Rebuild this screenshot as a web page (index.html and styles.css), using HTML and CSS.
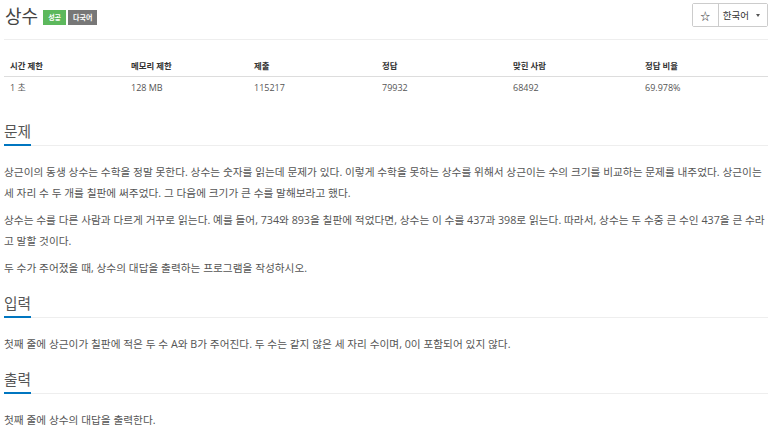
FILE: index.html
```html
<!DOCTYPE html>
<html lang="ko">
<head>
<meta charset="utf-8">
<title>상수</title>
<link rel="stylesheet" href="styles.css">
</head>
<body>
<div class="page">
  <div class="header">
    <div class="title-wrap">
      <h1 class="title">상수</h1>
      <span class="badge badge-success">성공</span>
      <span class="badge badge-default">다국어</span>
    </div>
    <div class="btn-group">
      <span class="btn btn-star">☆</span>
      <span class="btn btn-lang">한국어 <span class="caret"></span></span>
    </div>
  </div>

  <div class="info-table">
    <div class="th">시간 제한</div>
    <div class="th">메모리 제한</div>
    <div class="th">제출</div>
    <div class="th">정답</div>
    <div class="th">맞힌 사람</div>
    <div class="th">정답 비율</div>
    <div class="td">1 초</div>
    <div class="td">128 MB</div>
    <div class="td">115217</div>
    <div class="td">79932</div>
    <div class="td">68492</div>
    <div class="td">69.978%</div>
  </div>

  <section class="section">
    <h2 class="section-head"><span>문제</span></h2>
    <div class="section-body">
      <p>상근이의 동생 상수는 수학을 정말 못한다. 상수는 숫자를 읽는데 문제가 있다. 이렇게 수학을 못하는 상수를 위해서 상근이는 수의 크기를 비교하는 문제를 내주었다. 상근이는 세 자리 수 두 개를 칠판에 써주었다. 그 다음에 크기가 큰 수를 말해보라고 했다.</p>
      <p>상수는 수를 다른 사람과 다르게 거꾸로 읽는다. 예를 들어, 734와 893을 칠판에 적었다면, 상수는 이 수를 437과 398로 읽는다. 따라서, 상수는 두 수중 큰 수인 437을 큰 수라고 말할 것이다.</p>
      <p>두 수가 주어졌을 때, 상수의 대답을 출력하는 프로그램을 작성하시오.</p>
    </div>
  </section>

  <section class="section">
    <h2 class="section-head"><span>입력</span></h2>
    <div class="section-body">
      <p>첫째 줄에 상근이가 칠판에 적은 두 수 A와 B가 주어진다. 두 수는 같지 않은 세 자리 수이며, 0이 포함되어 있지 않다.</p>
    </div>
  </section>

  <section class="section">
    <h2 class="section-head"><span>출력</span></h2>
    <div class="section-body">
      <p>첫째 줄에 상수의 대답을 출력한다.</p>
    </div>
  </section>
</div>
</body>
</html>
```

FILE: styles.css
```css
html, body {
  margin: 0;
  padding: 0;
  background: #fff;
}
body {
  font-family: "Open Sans", "Noto Sans CJK KR", sans-serif;
  color: #555;
}
.page {
  padding: 0 5px 0 4px;
}
.header {
  display: flex;
  justify-content: space-between;
  align-items: flex-start;
  height: 40px;
  border-bottom: 1px solid #eee;
  box-sizing: border-box;
}
.title-wrap {
  display: flex;
  align-items: center;
  padding-top: 4px;
  padding-left: 1px;
}
.title {
  margin: 0;
  font-size: 18px;
  font-weight: 400;
  line-height: 24px;
  color: #444;
}
.badge {
  display: inline-block;
  height: 15px;
  line-height: 15px;
  padding: 0 5px;
  font-size: 7px;
  font-weight: 700;
  color: #fff;
  margin-top: 3px;
}
.badge-success {
  background: #5cb85c;
  margin-left: 5px;
}
.badge-default {
  background: #777;
  margin-left: 2px;
}
.btn-group {
  display: flex;
  margin-top: 3px;
  border: 1px solid #ccc;
  border-radius: 2px;
  height: 24px;
  box-sizing: border-box;
}
.btn {
  display: flex;
  align-items: center;
  font-size: 9.5px;
  color: #333;
  background: #fff;
}
.btn-star {
  width: 25px;
  justify-content: center;
  border-right: 1px solid #ccc;
  font-size: 10px;
}
.btn-lang {
  padding: 0 7px 0 4px;
  gap: 7px;
}
.caret {
  width: 0;
  height: 0;
  border-left: 2.5px solid transparent;
  border-right: 2.5px solid transparent;
  border-top: 3px solid #555;
}
.info-table {
  display: grid;
  grid-template-columns: 121px 123px 128px 131px 132px 1fr;
  margin-top: 15px;
}
.th {
  font-size: 8.4px;
  font-weight: 700;
  color: #333;
  height: 21px;
  line-height: 21px;
  padding: 0 6px;
  border-bottom: 1px solid #ddd;
}
.td {
  font-size: 9px;
  color: #555;
  height: 22px;
  line-height: 22px;
  padding: 0 6px;
}
.section {
  margin-top: 12px;
}
.info-table + .section {
  margin-top: 20px;
}
.section-head {
  margin: 0;
  font-size: 14.7px;
  font-weight: 400;
  line-height: 24px;
  color: #555;
  border-bottom: 1px solid #eee;
}
.section-head span {
  display: inline-block;
  border-bottom: 2px solid #0076c0;
  margin-bottom: -1px;
  padding-bottom: 1px;
}
.section-body {
  margin-top: 16px;
}
.section-body p {
  margin: 0 0 6px;
  font-size: 10.7px;
  line-height: 21px;
}
.section-body p:last-child {
  margin-bottom: 0;
}
```
